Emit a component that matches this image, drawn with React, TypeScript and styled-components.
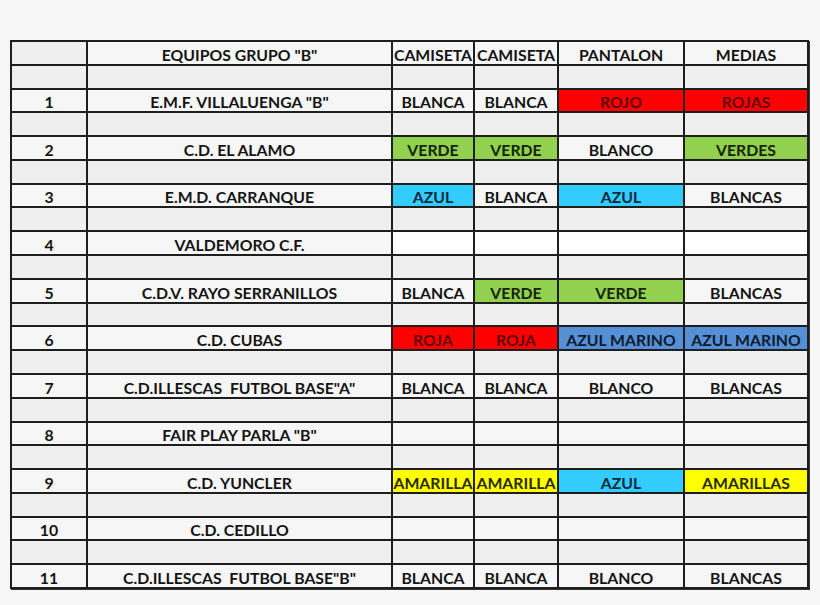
import React from 'react';
import styled, { createGlobalStyle } from 'styled-components';

const GlobalStyle = createGlobalStyle`
    html, body {
        margin: 0;
        padding: 0;
        background: #f6f6f6;
    }
    body {
        font-family: Lato, "Open Sans", "Liberation Sans", sans-serif;
    }
`;

const Page = styled.div`
    width: 820px;
    height: 605px;
    padding: 40px 0 0 10px;
    box-sizing: border-box;
`;

const Sheet = styled.table`
    width: 797px;
    height: 549px;
    border-collapse: collapse;
    table-layout: fixed;
    box-shadow: 1px 1px 0 #333;
`;

const Row = styled.tr<{ $spacer?: boolean }>`
    height: 22px;
    background: ${(p) => (p.$spacer ? '#efefef' : '#f6f6f6')};
`;

const Cell = styled.td<{ $fill?: string; $ink?: string; $tight?: boolean }>`
    border: 2px solid #1e1e1e;
    padding: 0 ${(p) => (p.$tight ? '0' : '2px')} 0;
    background: ${(p) => p.$fill || 'transparent'};
    color: ${(p) => p.$ink || '#141414'};
    font-size: 15.8px;
    font-weight: 700;
    text-align: center;
    vertical-align: bottom;
    white-space: nowrap;
    overflow: hidden;
    line-height: 18px;
`;

const Col = styled.col<{ $w: number }>`
    width: ${(p) => p.$w}px;
`;

type Kit = { text: string; fill?: string; ink?: string } | null;

const W = { text: 'BLANCA' };
const colors: Record<string, { fill: string; ink: string }> = {
    red: { fill: '#ff0000', ink: '#5c0000' },
    green: { fill: '#92d050', ink: '#16220a' },
    cyan: { fill: '#33ccff', ink: '#0c2a38' },
    navy: { fill: '#5590d6', ink: '#0e1a2c' },
    yellow: { fill: '#ffff00', ink: '#2a2a00' },
    white: { fill: '#ffffff', ink: '#141414' },
};

const k = (text: string, c?: string): Kit => (c ? { text, ...colors[c] } : { text });
const blank = (c?: string): Kit => (c ? { text: '', ...colors[c] } : null);

const teams: { name: string; kits: Kit[] }[] = [
    { name: 'E.M.F. VILLALUENGA "B"', kits: [W, W, k('ROJO', 'red'), k('ROJAS', 'red')] },
    { name: 'C.D. EL ALAMO', kits: [k('VERDE', 'green'), k('VERDE', 'green'), k('BLANCO'), k('VERDES', 'green')] },
    { name: 'E.M.D. CARRANQUE', kits: [k('AZUL', 'cyan'), W, k('AZUL', 'cyan'), k('BLANCAS')] },
    { name: 'VALDEMORO C.F.', kits: [blank('white'), blank('white'), blank('white'), blank('white')] },
    { name: 'C.D.V. RAYO SERRANILLOS', kits: [W, k('VERDE', 'green'), k('VERDE', 'green'), k('BLANCAS')] },
    { name: 'C.D. CUBAS', kits: [k('ROJA', 'red'), k('ROJA', 'red'), k('AZUL MARINO', 'navy'), k('AZUL MARINO', 'navy')] },
    { name: 'C.D.ILLESCAS\u00a0 FUTBOL BASE"A"', kits: [W, W, k('BLANCO'), k('BLANCAS')] },
    { name: 'FAIR PLAY PARLA "B"', kits: [null, null, null, null] },
    { name: 'C.D. YUNCLER', kits: [k('AMARILLA', 'yellow'), k('AMARILLA', 'yellow'), k('AZUL', 'cyan'), k('AMARILLAS', 'yellow')] },
    { name: 'C.D. CEDILLO', kits: [null, null, null, null] },
    { name: 'C.D.ILLESCAS\u00a0 FUTBOL BASE"B"', kits: [W, W, k('BLANCO'), k('BLANCAS')] },
];

const widths = [76, 305, 82, 84, 126, 124];

function Spacer() {
    return (
        <Row $spacer>
            {widths.map((_, i) => (
                <Cell key={i} />
            ))}
        </Row>
    );
}

export default function App() {
    return (
        <>
            <GlobalStyle />
            <Page>
                <Sheet>
                    <colgroup>
                        {widths.map((w, i) => (
                            <Col key={i} $w={w} />
                        ))}
                    </colgroup>
                    <tbody>
                        <Row>
                            <Cell $fill="#efefef" />
                            <Cell>EQUIPOS GRUPO "B"</Cell>
                            <Cell $tight>CAMISETA</Cell>
                            <Cell $tight>CAMISETA</Cell>
                            <Cell>PANTALON</Cell>
                            <Cell>MEDIAS</Cell>
                        </Row>
                        {teams.map((t, i) => (
                            <React.Fragment key={t.name}>
                                <Spacer />
                                <Row>
                                    <Cell>{i + 1}</Cell>
                                    <Cell>{t.name}</Cell>
                                    {t.kits.map((kit, j) => (
                                        <Cell key={j} $fill={kit?.fill} $ink={kit?.ink} $tight={j < 2}>
                                            {kit?.text}
                                        </Cell>
                                    ))}
                                </Row>
                            </React.Fragment>
                        ))}
                    </tbody>
                </Sheet>
            </Page>
        </>
    );
}
